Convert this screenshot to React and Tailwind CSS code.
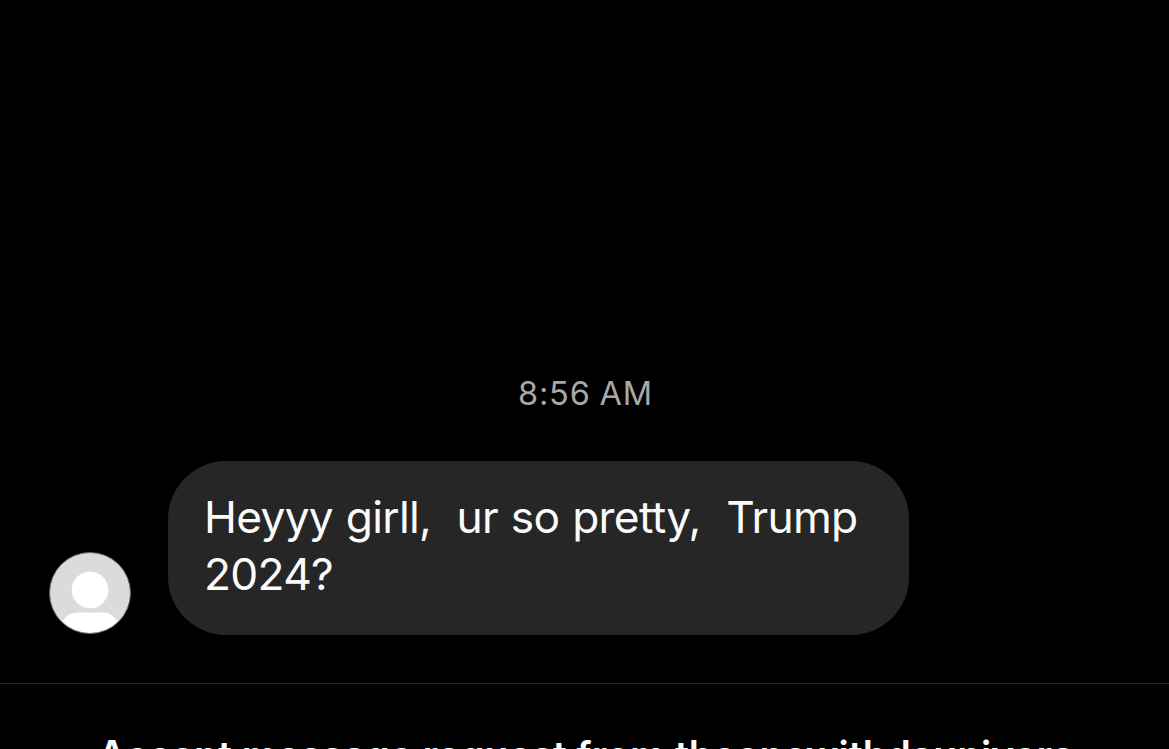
function Avatar() {
  return (
    <svg className="mb-px h-[82px] w-[82px] shrink-0" viewBox="0 0 82 82" aria-label="Profile photo">
      <clipPath id="avatar-clip">
        <circle cx="41" cy="41" r="40" />
      </clipPath>
      <circle cx="41" cy="41" r="40.5" fill="#dbdbdb" />
      <g clipPath="url(#avatar-clip)" fill="#ffffff">
        <circle cx="41" cy="38" r="18.3" />
        <path d="M11 84C11 69 17 60.5 29 60.5H53C65 60.5 71 69 71 84Z" />
      </g>
      <circle cx="41" cy="41" r="40.5" fill="none" stroke="#666666" strokeWidth="1" />
    </svg>
  );
}

function MessageBubble({ children }) {
  return (
    <div className="ml-[37px] h-[174px] w-[741px] rounded-[58px] bg-[#262626] pt-[28px] pl-[36px]">
      <p className="text-[44.3px] leading-[57px] tracking-[-0.7px] [word-spacing:1px] whitespace-pre-wrap text-[#fafafa]">
        {children}
      </p>
    </div>
  );
}

export default function App() {
  return (
    <main className="flex h-screen w-full flex-col overflow-hidden bg-black font-['Inter',sans-serif]">
      <div className="flex h-[683px] shrink-0 flex-col justify-end pb-[48px]">
        <time className="mb-[47px] pl-[2px] text-center text-[32.5px] leading-[40px] tracking-[0.8px] [word-spacing:-1px] text-[#a8a8a8]">
          8:56 AM
        </time>
        <div className="flex items-end pl-[49px]">
          <Avatar />
          <MessageBubble>{'Heyyy girll,  ur so pretty,  Trump\n2024?'}</MessageBubble>
        </div>
      </div>
      <footer className="shrink-0 border-t border-[#262626] pt-[46px] text-center">
        <p className="pl-[2px] text-[39px] leading-[50px] font-semibold whitespace-nowrap text-[#fafafa]">
          Accept message request from theonewithdaunivers
        </p>
      </footer>
    </main>
  );
}
